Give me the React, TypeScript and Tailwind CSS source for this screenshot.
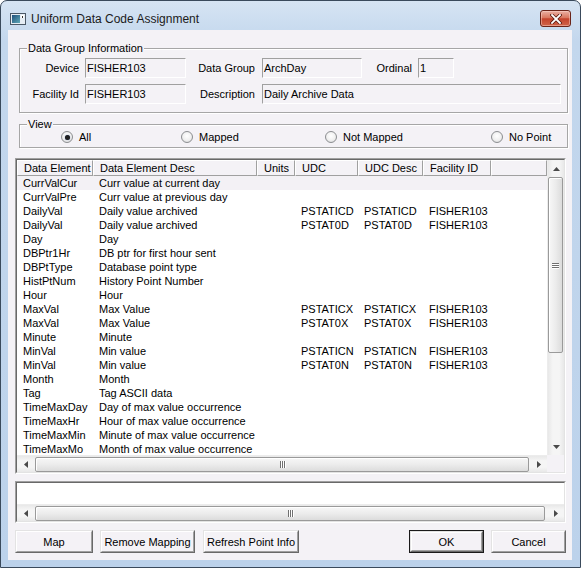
import React from "react";

type Row = [string, string, string, string, string, string];

const rows: Row[] = [
  ["CurrValCur", "Curr value at current day", "", "", "", ""],
  ["CurrValPre", "Curr value at previous day", "", "", "", ""],
  ["DailyVal", "Daily value archived", "", "PSTATICD", "PSTATICD", "FISHER103"],
  ["DailyVal", "Daily value archived", "", "PSTAT0D", "PSTAT0D", "FISHER103"],
  ["Day", "Day", "", "", "", ""],
  ["DBPtr1Hr", "DB ptr for first hour sent", "", "", "", ""],
  ["DBPtType", "Database point type", "", "", "", ""],
  ["HistPtNum", "History Point Number", "", "", "", ""],
  ["Hour", "Hour", "", "", "", ""],
  ["MaxVal", "Max Value", "", "PSTATICX", "PSTATICX", "FISHER103"],
  ["MaxVal", "Max Value", "", "PSTAT0X", "PSTAT0X", "FISHER103"],
  ["Minute", "Minute", "", "", "", ""],
  ["MinVal", "Min value", "", "PSTATICN", "PSTATICN", "FISHER103"],
  ["MinVal", "Min value", "", "PSTAT0N", "PSTAT0N", "FISHER103"],
  ["Month", "Month", "", "", "", ""],
  ["Tag", "Tag ASCII data", "", "", "", ""],
  ["TimeMaxDay", "Day of max value occurrence", "", "", "", ""],
  ["TimeMaxHr", "Hour of max value occurrence", "", "", "", ""],
  ["TimeMaxMin", "Minute of max value occurrence", "", "", "", ""],
  ["TimeMaxMo", "Month of max value occurrence", "", "", "", ""],
];

const colW = [
  "w-[76px]",
  "w-[164px]",
  "w-[38px]",
  "w-[63px]",
  "w-[65px]",
  "w-[68px]",
  "w-[56px]",
];
const headers = ["Data Element", "Data Element Desc", "Units", "UDC", "UDC Desc", "Facility ID", ""];

function Arrow({ dir }: { dir: "up" | "down" | "left" | "right" }) {
  const pts =
    dir === "up"
      ? "0,4 3.5,0 7,4"
      : dir === "down"
      ? "0,0 3.5,4 7,0"
      : dir === "left"
      ? "4,0 0,3.5 4,7"
      : "0,0 4,3.5 0,7";
  const w = dir === "up" || dir === "down" ? 7 : 4;
  const h = dir === "up" || dir === "down" ? 4 : 7;
  return (
    <svg width={w} height={h} viewBox={`0 0 ${w} ${h}`}>
      <polygon points={pts} fill="#4a4a4a" />
    </svg>
  );
}

function HThumb({ w }: { w: string }) {
  return (
    <div
      className={`${w} h-[15px] rounded-[2px] border border-[#9a9a9a] bg-[linear-gradient(#f7f7f7,#ececec_50%,#dcdcdc)] shadow-[inset_1px_1px_0_#ffffff] flex items-center justify-center`}
    >
      <div className="flex gap-[1px]">
        <div className="w-[1px] h-[7px] bg-[#707070] shadow-[1px_0_0_#ffffff]" />
        <div className="w-[1px] h-[7px] bg-[#707070] shadow-[1px_0_0_#ffffff]" />
        <div className="w-[1px] h-[7px] bg-[#707070] shadow-[1px_0_0_#ffffff]" />
      </div>
    </div>
  );
}

function TextBox({ w, children }: { w: string; children: React.ReactNode }) {
  return (
    <div
      className={`${w} h-[20px] border-t border-l border-[#a0a0a0] border-b-white border-r-white border-b border-r flex items-center pl-[1px] whitespace-nowrap overflow-hidden`}
    >
      {children}
    </div>
  );
}

function Radio({ checked, label }: { checked?: boolean; label: string }) {
  return (
    <div className="flex items-center h-[14px]">
      <span className="w-[12px] h-[12px] rounded-full border border-[#8c8e91] bg-[radial-gradient(circle_at_50%_40%,#ffffff_0%,#f0f0f0_55%,#d2d2d2_100%)] flex items-center justify-center shrink-0">
        {checked && <span className="w-[5px] h-[5px] rounded-full bg-[#202020] shadow-[0_0_1px_#4060a0]" />}
      </span>
      <span className="ml-[6px] whitespace-nowrap">{label}</span>
    </div>
  );
}

function Btn({ w, label, def }: { w: string; label: string; def?: boolean }) {
  const inner = (
    <div className="h-full border-t border-l border-t-[#e3e3e3] border-l-[#e3e3e3] border-b border-r border-b-[#696969] border-r-[#696969]">
      <div className="h-full border-t border-l border-t-white border-l-white border-b border-r border-b-[#a0a0a0] border-r-[#a0a0a0] flex items-center justify-center bg-[#f4f2f6] whitespace-nowrap">
        {label}
      </div>
    </div>
  );
  if (def) {
    return <div className={`${w} h-[23px] border border-[#1a1a1a]`}>{inner}</div>;
  }
  return <div className={`${w} h-[23px]`}>{inner}</div>;
}

export default function App() {
  return (
    <div className="w-[581px] h-[568px] bg-white font-['Liberation_Sans',Arial,sans-serif] text-[11px] leading-[14px] text-black">
      <div className="w-[581px] h-[568px] border border-[#3a4a5c] rounded-t-[7px] bg-[linear-gradient(#d6e4f3,#c3d7ed_40px,#bcd2eb)] flex flex-col overflow-hidden">
        {/* Title bar */}
        <div className="h-[29px] shrink-0 flex items-center pt-[6px] pl-[9px] pr-[9px]">
          <svg width="16" height="16" viewBox="0 0 16 16" className="shrink-0">
            <defs>
              <linearGradient id="ig" x1="0" y1="0" x2="1" y2="1">
                <stop offset="0" stopColor="#1f4f7a" />
                <stop offset="1" stopColor="#5fa9b8" />
              </linearGradient>
            </defs>
            <rect x="0.5" y="2.5" width="15" height="11" fill="#e6edf4" stroke="#4b5866" />
            <rect x="2" y="4" width="8" height="8" fill="url(#ig)" />
            <rect x="11" y="4" width="3" height="3" fill="#ffffff" />
            <rect x="12" y="5" width="1" height="2" fill="#333" />
          </svg>
          <div className="ml-[5px] text-[12px] text-[#1b1b1b] whitespace-nowrap">Uniform Data Code Assignment</div>
          <div className="flex-1" />
          <div className="w-[31px] h-[17px] rounded-[3px] border border-[#6a2419] bg-[linear-gradient(#eab0a4,#d9775f_45%,#c4432c_52%,#d0654a)] shadow-[inset_0_0_0_1px_rgba(255,220,210,0.45)] flex items-center justify-center shrink-0">
            <svg width="12" height="10" viewBox="0 0 12 10">
              <path d="M2 1 L10 9 M10 1 L2 9" stroke="#5a1a10" strokeWidth="3.4" strokeLinecap="square" />
              <path d="M2 1 L10 9 M10 1 L2 9" stroke="#ffffff" strokeWidth="1.8" strokeLinecap="square" />
            </svg>
          </div>
        </div>

        {/* Client area */}
        <div className="ml-[7px] mr-[8px] mb-[7px] h-[530px] bg-[#f4f2f6] flex flex-col px-[7px]">
          {/* Data Group Information */}
          <div className="relative mt-[18px] ml-[4px] w-[549px] h-[65px] border border-[#a6a6a6] shadow-[inset_1px_1px_0_#ffffff,1px_1px_0_#ffffff] pt-[9px] flex flex-col gap-[6px]">
            <span className="absolute left-[7px] top-[-8px] px-[1px] bg-[#f4f2f6]">Data Group Information</span>
            <div className="flex items-center">
              <div className="w-[59px] text-right">Device</div>
              <div className="ml-[6px]">
                <TextBox w="w-[101px]">FISHER103</TextBox>
              </div>
              <div className="w-[69px] text-right">Data Group</div>
              <div className="ml-[7px]">
                <TextBox w="w-[100px]">ArchDay</TextBox>
              </div>
              <div className="w-[50px] text-right">Ordinal</div>
              <div className="ml-[6px]">
                <TextBox w="w-[36px]">1</TextBox>
              </div>
            </div>
            <div className="flex items-center">
              <div className="w-[59px] text-right">Facility Id</div>
              <div className="ml-[6px]">
                <TextBox w="w-[101px]">FISHER103</TextBox>
              </div>
              <div className="w-[69px] text-right">Description</div>
              <div className="ml-[7px]">
                <TextBox w="w-[299px]">Daily Archive Data</TextBox>
              </div>
            </div>
          </div>

          {/* View */}
          <div className="relative mt-[11px] ml-[4px] w-[549px] h-[24px] border border-[#a6a6a6] shadow-[inset_1px_1px_0_#ffffff,1px_1px_0_#ffffff] pt-[5px] pl-[41px] flex items-start">
            <span className="absolute left-[7px] top-[-8px] px-[1px] bg-[#f4f2f6]">View</span>
            <div className="w-[120px]">
              <Radio checked label="All" />
            </div>
            <div className="w-[144px]">
              <Radio label="Mapped" />
            </div>
            <div className="w-[166px]">
              <Radio label="Not Mapped" />
            </div>
            <div>
              <Radio label="No Point" />
            </div>
          </div>

          {/* List view */}
          <div className="mt-[10px] w-[551px] h-[316px] border border-t-[#a0a0a0] border-l-[#a0a0a0] border-b-white border-r-white">
            <div className="w-full h-full border border-t-[#696969] border-l-[#696969] border-b-[#e3e3e3] border-r-[#e3e3e3] bg-white flex flex-col">
              <div className="flex h-[295px]">
                <div className="w-[530px] flex flex-col overflow-hidden">
                  {/* header */}
                  <div className="flex h-[16px] shrink-0 bg-[#f4f2f6]">
                    {headers.map((h, i) => (
                      <div
                        key={i}
                        className={`${colW[i]} h-[16px] shrink-0 border-t border-l border-t-white border-l-white border-r border-b border-r-[#a0a0a0] border-b-[#a0a0a0] pl-[6px] flex items-center whitespace-nowrap overflow-hidden`}
                      >
                        {h}
                      </div>
                    ))}
                  </div>
                  {/* rows */}
                  <div className="flex-1 overflow-hidden">
                    {rows.map((r, ri) => (
                      <div key={ri} className={`flex h-[14px] ${ri === 0 ? "bg-[#f3f1f5]" : ""}`}>
                        {r.map((c, ci) => (
                          <div
                            key={ci}
                            className={`${colW[ci]} shrink-0 pl-[6px] whitespace-nowrap overflow-hidden leading-[14px]`}
                          >
                            {c}
                          </div>
                        ))}
                        <div className="w-[56px] shrink-0" />
                      </div>
                    ))}
                  </div>
                </div>
                {/* vertical scrollbar */}
                <div className="w-[17px] h-[295px] flex flex-col bg-[linear-gradient(90deg,#e8e8e8,#f5f5f5_30%,#f5f5f5_70%,#e8e8e8)] border-l border-[#ececec]">
                  <div className="h-[17px] flex items-center justify-center">
                    <Arrow dir="up" />
                  </div>
                  <div className="flex-1 pl-[0px]">
                    <div className="w-[15px] h-[176px] rounded-[2px] border border-[#9a9a9a] bg-[linear-gradient(90deg,#f7f7f7,#ececec_50%,#dcdcdc)] shadow-[inset_1px_1px_0_#ffffff] flex items-center justify-center">
                      <div className="flex flex-col gap-[1px]">
                        <div className="w-[7px] h-[1px] bg-[#707070] shadow-[0_1px_0_#ffffff]" />
                        <div className="w-[7px] h-[1px] bg-[#707070] shadow-[0_1px_0_#ffffff]" />
                        <div className="w-[7px] h-[1px] bg-[#707070] shadow-[0_1px_0_#ffffff]" />
                      </div>
                    </div>
                  </div>
                  <div className="h-[17px] flex items-center justify-center">
                    <Arrow dir="down" />
                  </div>
                </div>
              </div>
              {/* horizontal scrollbar */}
              <div className="flex h-[17px]">
                <div className="w-[530px] h-[17px] flex items-center bg-[linear-gradient(#e8e8e8,#f5f5f5_30%,#f5f5f5_70%,#e8e8e8)] border-t border-[#ececec]">
                  <div className="w-[17px] flex items-center justify-center">
                    <Arrow dir="left" />
                  </div>
                  <div className="flex-1 pl-[1px]">
                    <HThumb w="w-[494px]" />
                  </div>
                  <div className="w-[17px] flex items-center justify-center">
                    <Arrow dir="right" />
                  </div>
                </div>
                <div className="w-[17px] h-[17px] bg-[#f4f2f6]" />
              </div>
            </div>
          </div>

          {/* Second list */}
          <div className="mt-[7px] w-[551px] h-[42px] border border-t-[#a0a0a0] border-l-[#a0a0a0] border-b-white border-r-white">
            <div className="w-full h-full border border-t-[#696969] border-l-[#696969] border-b-[#e3e3e3] border-r-[#e3e3e3] bg-white flex flex-col">
              <div className="flex-1" />
              <div className="h-[17px] flex items-center bg-[linear-gradient(#e8e8e8,#f5f5f5_30%,#f5f5f5_70%,#e8e8e8)] border-t border-[#ececec]">
                <div className="w-[17px] flex items-center justify-center">
                  <Arrow dir="left" />
                </div>
                <div className="flex-1 pl-[1px]">
                  <HThumb w="w-[510px]" />
                </div>
                <div className="w-[17px] flex items-center justify-center">
                  <Arrow dir="right" />
                </div>
              </div>
            </div>
          </div>

          {/* Buttons */}
          <div className="mt-[7px] w-[551px] flex items-center">
            <Btn w="w-[78px]" label="Map" />
            <div className="ml-[7px]">
              <Btn w="w-[95px]" label="Remove Mapping" />
            </div>
            <div className="ml-[8px]">
              <Btn w="w-[96px]" label="Refresh Point Info" />
            </div>
            <div className="flex-1" />
            <Btn w="w-[75px]" label="OK" def />
            <div className="ml-[7px]">
              <Btn w="w-[75px]" label="Cancel" />
            </div>
          </div>
        </div>
      </div>
    </div>
  );
}
